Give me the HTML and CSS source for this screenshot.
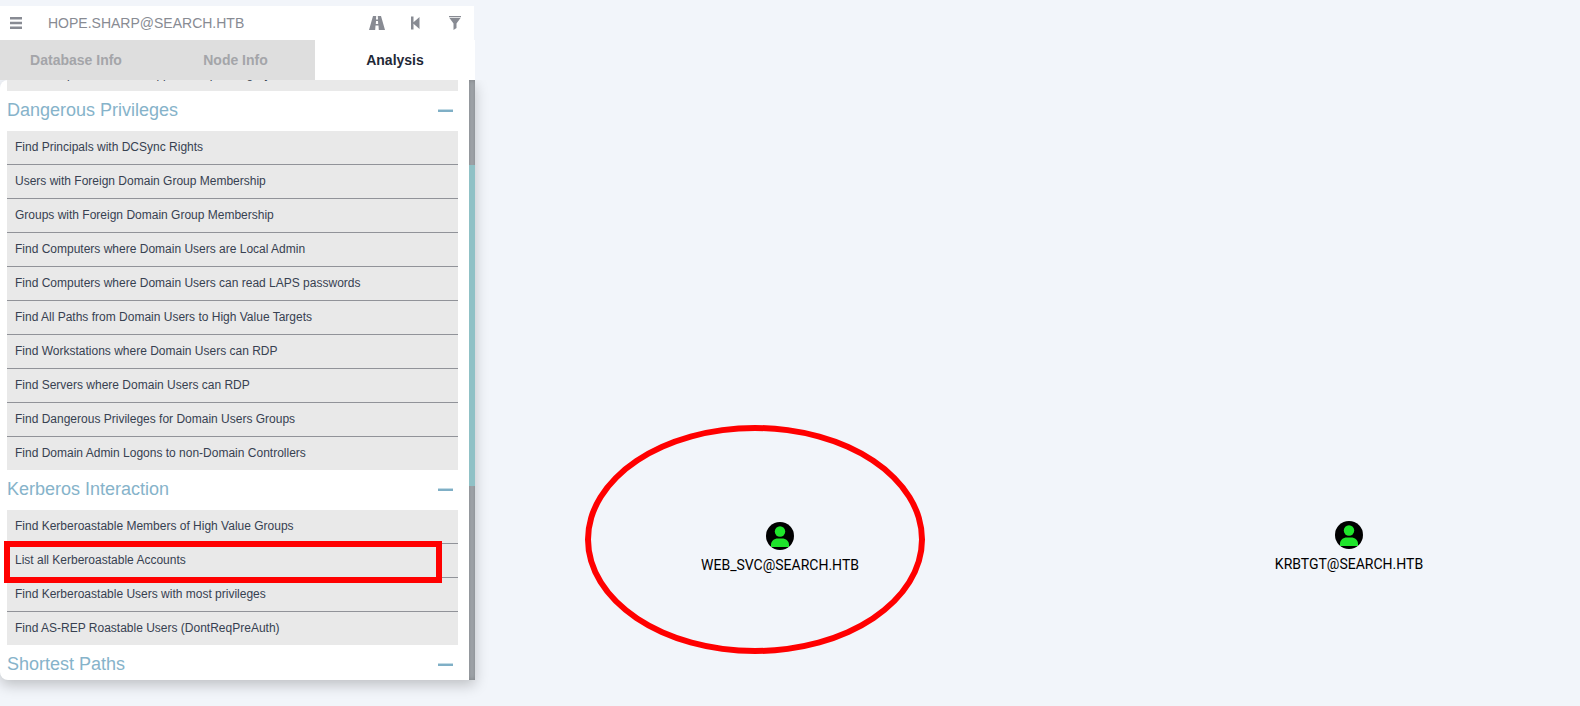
FILE: index.html
```
<!DOCTYPE html>
<html lang="en">
<head>
<meta charset="utf-8">
<title>BloodHound</title>
<link rel="stylesheet" href="styles.css">
</head>
<body>
<main class="app">
  <aside class="panel">
    <form class="search">
      <button class="icon-button" type="button" aria-label="More info">
        <svg width="12" height="12" viewBox="0 0 12 12"><path d="M0 0h12v2.400H0zM0 4.800h12v2.400H0zM0 9.600h12V12H0z"/></svg>
      </button>
      <input class="search-input" type="text" aria-label="Search for a node" value="HOPE.SHARP@SEARCH.HTB">
      <button class="icon-button" type="button" aria-label="Pathfinding">
        <svg width="16" height="14" viewBox="0 0 16 14"><path fill-rule="evenodd" d="M4 0H7.200L7 3.500H9L8.800 0H12L16 14H9.800L9.500 9.500H6.500L6.200 14H0ZM7 5L6.800 8H9.200L9 5Z"/></svg>
      </button>
      <button class="icon-button" type="button" aria-label="Back">
        <svg width="16" height="14" viewBox="0 0 16 14"><path d="M3 .500h2.500v5.800L11.500 1v12L5.500 7.700V13.500H3z"/></svg>
      </button>
      <button class="icon-button" type="button" aria-label="Filter">
        <svg width="12" height="14" viewBox="0 0 12 14"><path d="M0 0h12v1.200H0zM.500 2h11L7.500 7.500V12L4.500 14V7.500z"/></svg>
      </button>
    </form>
    <nav class="tabs">
      <button class="tab" type="button">Database Info</button>
      <button class="tab" type="button">Node Info</button>
      <button class="tab tab-active" type="button">Analysis</button>
    </nav>
    <div class="results">
      <div class="queries">
        <ul class="query-list">
          <li><button class="query" type="button">Find Computers with Unsupported Operating Systems</button></li>
        </ul>
        <button class="section" type="button">Dangerous Privileges<span class="minus"></span></button>
        <ul class="query-list">
          <li><button class="query" type="button">Find Principals with DCSync Rights</button></li>
          <li><button class="query" type="button">Users with Foreign Domain Group Membership</button></li>
          <li><button class="query" type="button">Groups with Foreign Domain Group Membership</button></li>
          <li><button class="query" type="button">Find Computers where Domain Users are Local Admin</button></li>
          <li><button class="query" type="button">Find Computers where Domain Users can read LAPS passwords</button></li>
          <li><button class="query" type="button">Find All Paths from Domain Users to High Value Targets</button></li>
          <li><button class="query" type="button">Find Workstations where Domain Users can RDP</button></li>
          <li><button class="query" type="button">Find Servers where Domain Users can RDP</button></li>
          <li><button class="query" type="button">Find Dangerous Privileges for Domain Users Groups</button></li>
          <li><button class="query" type="button">Find Domain Admin Logons to non-Domain Controllers</button></li>
        </ul>
        <button class="section" type="button">Kerberos Interaction<span class="minus"></span></button>
        <ul class="query-list">
          <li><button class="query" type="button">Find Kerberoastable Members of High Value Groups</button></li>
          <li class="marked"><button class="query" type="button">List all Kerberoastable Accounts</button></li>
          <li><button class="query" type="button">Find Kerberoastable Users with most privileges</button></li>
          <li><button class="query" type="button">Find AS-REP Roastable Users (DontReqPreAuth)</button></li>
        </ul>
        <button class="section" type="button">Shortest Paths<span class="minus"></span></button>
      </div>
      <div class="track"><div class="thumb"></div></div>
    </div>
  </aside>

  <div class="ring"></div>
  <div class="node node-web">
    <svg width="28" height="28" viewBox="0 0 28 28"><circle cx="14" cy="14" r="14"/><circle class="person" cx="14" cy="9.500" r="5.200"/><path class="person" d="M5 25v-2c0-4 3-6.500 7-6.500h4c4 0 7 2.500 7 6.500v2z"/></svg>
    <span>WEB_SVC@SEARCH.HTB</span>
  </div>
  <div class="node node-krbtgt">
    <svg width="28" height="28" viewBox="0 0 28 28"><circle cx="14" cy="14" r="14"/><circle class="person" cx="14" cy="9.500" r="5.200"/><path class="person" d="M5 25v-2c0-4 3-6.500 7-6.500h4c4 0 7 2.500 7 6.500v2z"/></svg>
    <span>KRBTGT@SEARCH.HTB</span>
  </div>
</main>
</body>
</html>
```
FILE: styles.css
```
* { box-sizing: border-box; }

body {
  margin: 0;
  background: #f2f5fa;
  font-family: "Liberation Sans", Arial, sans-serif;
}

button, input {
  margin: 0;
  padding: 0;
  border: 0;
  background: none;
  font: inherit;
  color: inherit;
}

.app {
  position: relative;
  display: flex;
  height: 100vh;
  padding: 6px 0 26px;
  overflow: hidden;
}

.panel {
  display: flex;
  flex-direction: column;
  width: calc(30% + 1px);
}

.search {
  display: flex;
  align-items: center;
  flex: none;
  height: 34px;
  margin-right: 1px;
  background: #fff;
  color: #888b93;
  font-size: 14px;
}

.icon-button {
  display: flex;
  align-items: center;
  justify-content: center;
  flex: none;
  width: 39px;
  height: 32px;
  fill: #888b93;
}

.icon-button:first-child { width: 32px; }

.search-input {
  flex: 1;
  min-width: 0;
  height: 34px;
  padding: 0 16px;
}

.tabs {
  display: grid;
  grid-template-columns: 156fr 159fr 160fr;
  flex: none;
  height: 40px;
  background: #fff;
}

.tab {
  background: #dedede;
  color: #a4a5a9;
  font-size: 14px;
  font-weight: bold;
}

.tab:first-child { padding-right: 4px; }

.tab-active {
  background: #fff;
  color: #1f2937;
}

.results {
  display: flex;
  flex: 1;
  min-height: 0;
  overflow: hidden;
  border-radius: 8px 0 0 8px;
  background: #fff;
  box-shadow: 0 5px 14px rgba(0, 0, 0, 0.22);
  clip-path: inset(0 -20px -20px 0);
}

.queries {
  flex: 1;
  margin: -22px 11px 0 7px;
}

.query-list {
  margin: 0;
  padding: 0;
  list-style: none;
  background: #e9e9e9;
}

.query-list li + li { border-top: 1px solid #919399; }

.query {
  display: block;
  width: 100%;
  height: 33px;
  padding: 0 8px 2px;
  color: #374151;
  font-size: 12px;
  text-align: left;
}

.section {
  display: flex;
  align-items: center;
  justify-content: space-between;
  width: 100%;
  height: 40px;
  padding: 0 5px 2px 0;
  color: #86b3ca;
  font-size: 18px;
}

.minus {
  width: 15px;
  height: 3px;
  border-top: 1px solid #c3dbe5;
  background: #7fafc6;
}

.marked { position: relative; }

.marked::after {
  content: "";
  position: absolute;
  z-index: 1;
  top: -3px;
  right: 16px;
  bottom: -6px;
  left: -3px;
  border: 6px solid #f00;
}

.track {
  flex: none;
  width: 6px;
  padding-top: 85px;
  background: #a6abb0;
  box-shadow: inset 0 0 5px rgba(0, 0, 0, 0.25);
}

.thumb {
  height: 321px;
  background: #90c1c6;
}

.ring {
  position: absolute;
  top: 425px;
  left: 585px;
  width: 340px;
  height: 229px;
  border: 6px solid #f00;
  border-radius: 50%;
}

.node {
  position: absolute;
  display: flex;
  flex-direction: column;
  align-items: center;
  gap: 6px;
  width: 180px;
  color: #000;
  font: 14px/16px Roboto, sans-serif;
}

.node-web { top: 522px; left: 690px; }
.node-krbtgt { top: 521px; left: 1259px; }
.node svg { overflow: visible; }
.node span { padding-top: 1px; }
.person { fill: #1fe52b; }
```
